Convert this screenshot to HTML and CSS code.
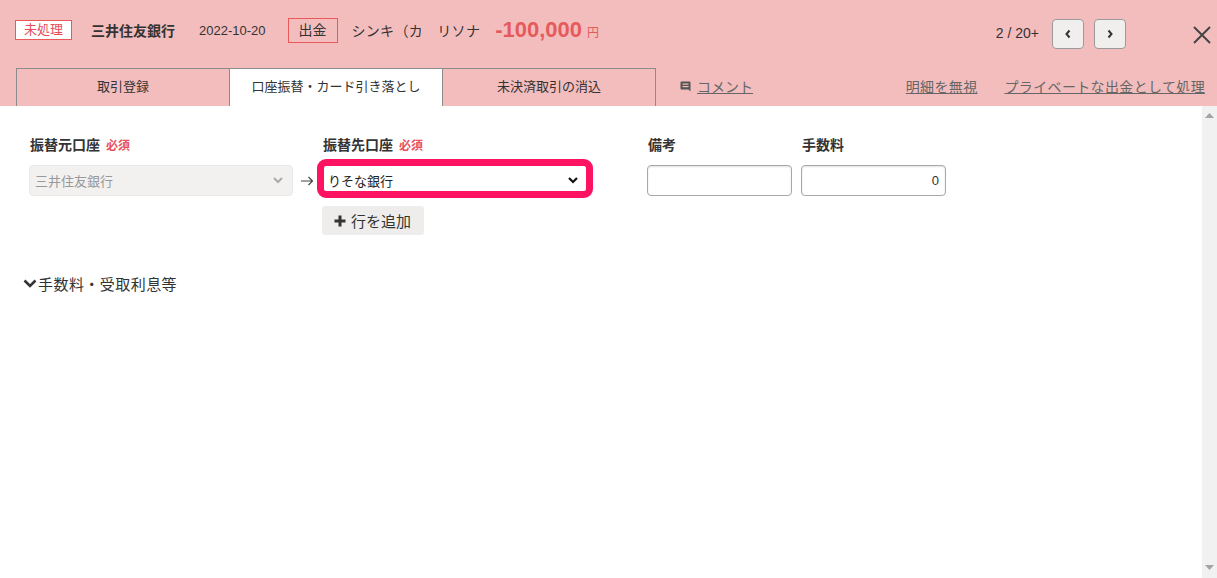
FILE: index.html
```html
<!DOCTYPE html>
<html lang="ja">
<head>
<meta charset="utf-8">
<title>明細</title>
<link rel="stylesheet" href="styles.css">
</head>
<body>
<div class="page">
  <header class="header">
    <div class="top-row">
      <span class="badge">未処理</span>
      <span class="bank">三井住友銀行</span>
      <span class="date">2022-10-20</span>
      <span class="kind">出金</span>
      <span class="desc">シンキ（カ　リソナ</span>
      <span class="amount">-100,000</span>
      <span class="yen">円</span>
      <span class="spacer"></span>
      <span class="pager">2 / 20+</span>
      <button class="nav-btn" aria-label="前へ">
        <svg width="8" height="10" viewBox="0 0 8 10"><polyline points="5.5,1.5 2.5,5 5.5,8.5" fill="none" stroke="#333" stroke-width="2"/></svg>
      </button>
      <button class="nav-btn" aria-label="次へ">
        <svg width="8" height="10" viewBox="0 0 8 10"><polyline points="2.5,1.5 5.5,5 2.5,8.5" fill="none" stroke="#333" stroke-width="2"/></svg>
      </button>
      <span class="close" aria-label="閉じる">
        <svg width="20" height="20" viewBox="0 0 20 20"><path d="M2 2 L18 18 M18 2 L2 18" stroke="#444" stroke-width="2" fill="none"/></svg>
      </span>
    </div>
    <div class="tab-row">
      <div class="tab">取引登録</div>
      <div class="tab active">口座振替・カード引き落とし</div>
      <div class="tab last">未決済取引の消込</div>
      <a class="comment">
        <svg class="comment-icon" width="11" height="11" viewBox="0 0 11 11"><path d="M0.5 1.5 Q0.5 0.5 1.5 0.5 H9.5 Q10.5 0.5 10.5 1.5 V10.5 L8.5 8.5 H1.5 Q0.5 8.5 0.5 7.5 Z" fill="#555"/><rect x="2.5" y="2.5" width="6" height="1.2" fill="#f3bdbd"/><rect x="2.5" y="5" width="6" height="1.2" fill="#f3bdbd"/></svg>
        <span class="link">コメント</span>
      </a>
      <span class="spacer"></span>
      <a class="link right-link">明細を無視</a>
      <a class="link right-link">プライベートな出金として処理</a>
    </div>
  </header>
  <main class="main">
    <div class="content">
      <div class="form-row">
        <div class="field col-from">
          <div class="label">振替元口座<span class="req">必須</span></div>
          <div class="select disabled">
            <span>三井住友銀行</span>
            <svg width="10" height="7" viewBox="0 0 10 7"><polyline points="1,1 5,5 9,1" fill="none" stroke="#aaa" stroke-width="2"/></svg>
          </div>
        </div>
        <div class="arrow">
          <svg width="13" height="10" viewBox="0 0 13 10"><path d="M0 5 H11.5 M7.5 1 L11.5 5 L7.5 9" fill="none" stroke="#444" stroke-width="1.2"/></svg>
        </div>
        <div class="field col-to">
          <div class="label">振替先口座<span class="req">必須</span></div>
          <div class="select highlighted">
            <span>りそな銀行</span>
            <svg width="10" height="7" viewBox="0 0 10 7"><polyline points="1,1 5,5 9,1" fill="none" stroke="#111" stroke-width="2.2"/></svg>
          </div>
          <button class="add-row">
            <svg width="12" height="12" viewBox="0 0 12 12"><path d="M6 0.5 V11.5 M0.5 6 H11.5" stroke="#333" stroke-width="3"/></svg>
            <span>行を追加</span>
          </button>
        </div>
        <div class="field col-memo">
          <div class="label">備考</div>
          <div class="input"></div>
        </div>
        <div class="field col-fee">
          <div class="label">手数料</div>
          <div class="input num">0</div>
        </div>
      </div>
      <div class="toggle">
        <svg width="14" height="9" viewBox="0 0 14 9"><polyline points="1.5,1.5 7,7 12.5,1.5" fill="none" stroke="#333" stroke-width="2.6"/></svg>
        <span>手数料・受取利息等</span>
      </div>
    </div>
    <div class="scrollbar">
      <svg width="9" height="5" viewBox="0 0 9 5"><polygon points="4.5,0 9,5 0,5" fill="#a3a3a3"/></svg>
      <svg width="9" height="5" viewBox="0 0 9 5"><polygon points="0,0 9,0 4.5,5" fill="#a3a3a3"/></svg>
    </div>
  </main>
</div>
</body>
</html>
```
FILE: styles.css
```css
* { box-sizing: border-box; }
html, body {
  margin: 0;
  padding: 0;
  height: 100%;
}
body {
  font-family: "Liberation Sans", "Noto Sans CJK JP", sans-serif;
  color: #333;
  background: #fff;
  overflow: hidden;
}
.page {
  width: 1217px;
  height: 578px;
  display: flex;
  flex-direction: column;
}
.header {
  background: #f3bdbd;
  height: 106px;
  flex: none;
}
.top-row {
  height: 60px;
  display: flex;
  align-items: center;
  padding-left: 15px;
  padding-right: 5px;
}
.badge {
  height: 20px;
  line-height: 18px;
  padding: 0 8px;
  border: 1px solid #e85a5a;
  background: #fff;
  color: #e84c55;
  font-size: 13px;
}
.bank {
  margin-left: 19px;
  font-size: 14px;
  font-weight: bold;
  color: #333;
}
.date {
  margin-left: 24px;
  font-size: 13px;
  color: #333;
}
.kind {
  margin-left: 22px;
  height: 25px;
  line-height: 23px;
  padding: 0 10px;
  border: 1px solid #e85a5a;
  font-size: 14px;
  color: #333;
}
.desc {
  margin-left: 14px;
  font-size: 14px;
  color: #333;
  letter-spacing: 0.3px;
}
.amount {
  margin-left: 15px;
  font-size: 22px;
  font-weight: bold;
  color: #e65a5c;
}
.yen {
  margin-left: 5px;
  font-size: 12px;
  color: #e65a5c;
  padding-top: 3px;
}
.spacer { flex: 1; }
.pager {
  font-size: 14px;
  color: #333;
  margin-right: 13px;
  margin-top: 6px;
}
.nav-btn {
  width: 32px;
  height: 30px;
  border: 1px solid #9a9a9a;
  border-radius: 4px;
  background: #f0efed;
  display: flex;
  align-items: center;
  justify-content: center;
  padding: 0;
  margin-right: 10px;
  margin-top: 8px;
}
.close {
  margin-left: 56px;
  display: flex;
  width: 20px;
  height: 20px;
  margin-top: 10px;
}
.tab-row {
  margin-top: 8px;
  height: 38px;
  display: flex;
  align-items: stretch;
  padding-left: 16px;
  padding-right: 12px;
}
.tab {
  width: 213px;
  border-top: 1px solid #8c8c8c;
  border-left: 1px solid #8c8c8c;
  font-size: 13px;
  color: #333;
  display: flex;
  align-items: center;
  justify-content: center;
  padding-bottom: 4px;
}
.tab.active { background: #fff; }
.tab.last {
  width: 214px;
  border-right: 1px solid #8c8c8c;
}
.comment {
  margin-left: 24px;
  display: flex;
  align-items: center;
  gap: 6px;
  padding-bottom: 3px;
}
.comment-icon { margin-top: 2px; }
.link {
  font-size: 14px;
  color: #666;
  text-decoration: underline;
  display: flex;
  align-items: center;
}
.right-link {
  margin-left: 27px;
  letter-spacing: 0.35px;
  padding-bottom: 3px;
}
.main {
  flex: 1;
  display: flex;
  min-height: 0;
}
.content {
  flex: 1;
  padding-top: 29px;
  padding-left: 29px;
}
.form-row {
  display: flex;
  align-items: flex-start;
}
.field { display: flex; flex-direction: column; }
.label {
  height: 20px;
  line-height: 20px;
  font-size: 14px;
  font-weight: bold;
  color: #333;
  margin-bottom: 10px;
  padding-left: 1px;
}
.req {
  font-size: 12px;
  color: #e8505b;
  margin-left: 6px;
}
.select {
  width: 264px;
  height: 31px;
  border-radius: 4px;
  display: flex;
  align-items: center;
  justify-content: space-between;
  padding: 0 9px 0 5px;
  font-size: 13px;
}
.select.disabled {
  background: #f2f1f0;
  border: 1px solid #ebeae8;
  color: #999;
}
.select.highlighted {
  width: 266px;
  background: #fff;
  border: 1px solid #ccc;
  color: #222;
  position: relative;
}
.select.highlighted::after {
  content: "";
  position: absolute;
  top: -7px;
  left: -6px;
  right: -6px;
  bottom: -3px;
  border: 7px solid #fe1262;
  border-radius: 9px;
  pointer-events: none;
}
.arrow {
  width: 29px;
  height: 31px;
  margin-top: 30px;
  display: flex;
  align-items: center;
  padding-left: 8px;
}
.col-to { width: 266px; }
.add-row {
  margin-top: 10px;
  width: 102px;
  height: 29px;
  border: none;
  border-radius: 3px;
  background: #eeedec;
  display: flex;
  align-items: center;
  padding: 0 0 0 12px;
  gap: 5px;
  font-family: inherit;
  font-size: 15px;
  color: #333;
}
.col-memo { margin-left: 59px; }
.col-fee { margin-left: 9px; }
.input {
  width: 145px;
  height: 31px;
  border: 1px solid #a8a8a8;
  border-radius: 4px;
  box-shadow: inset 0 1px 2px rgba(0,0,0,0.12);
  background: #fff;
  font-size: 13px;
  line-height: 29px;
}
.input.num {
  text-align: right;
  padding-right: 6px;
}
.toggle {
  margin-top: 38px;
  margin-left: -6px;
  height: 20px;
  display: flex;
  align-items: center;
  gap: 1px;
  font-size: 15px;
  letter-spacing: 0.45px;
  color: #333;
}
.scrollbar {
  width: 15px;
  flex: none;
  background: #f1f1f1;
  display: flex;
  flex-direction: column;
  justify-content: space-between;
  align-items: center;
  padding: 7px 0 8px;
}
```
